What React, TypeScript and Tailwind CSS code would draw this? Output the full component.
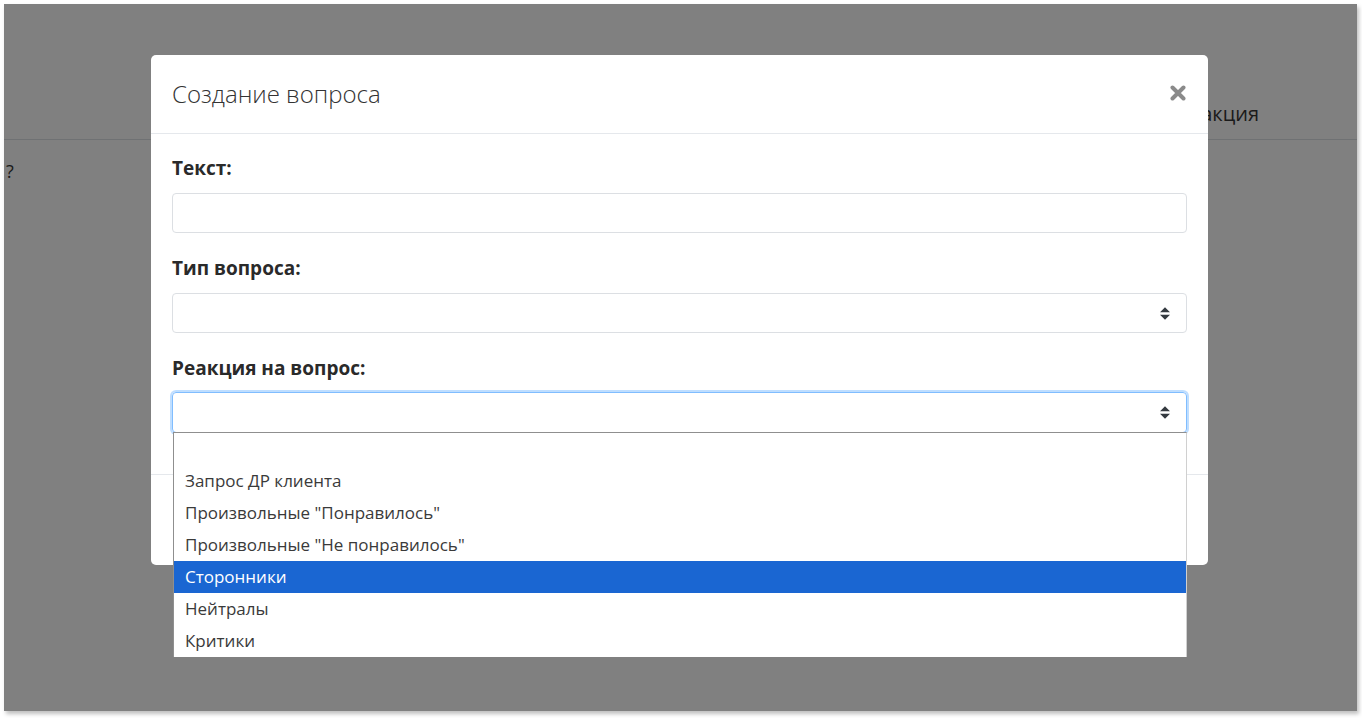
import React from "react";

const SelectArrows = () => (
  <svg width="10" height="13" viewBox="0 0 4 5" className="shrink-0">
    <path d="M2 0L0 2h4zm0 5L0 3h4z" fill="#343a40" />
  </svg>
);

const options = [
  "",
  "Запрос ДР клиента",
  'Произвольные "Понравилось"',
  'Произвольные "Не понравилось"',
  "Сторонники",
  "Нейтралы",
  "Критики",
];

export default function App() {
  return (
    <div
      className="w-[1362px] h-[718px] bg-white pl-[4px] pt-[4px] overflow-hidden"
      style={{ fontFamily: "'Open Sans', 'Noto Sans', sans-serif" }}
    >
      <div className="relative w-[1353px] h-[707px] bg-[#808080] shadow-[2px_3px_4px_rgba(0,0,0,0.25)] overflow-hidden">
        {/* background page (under overlay) */}
        <div className="flex justify-end h-[136px] border-b border-[#6f7173] pr-[98px] pt-[96px]">
          <span className="text-[20px] leading-[28px] text-[#1a1a1a]">Реакция</span>
        </div>
        <div className="pt-[20px] pl-[2px] text-[18px] leading-[22px] text-[#1a1a1a]">?</div>

        {/* modal */}
        <div className="absolute left-[147px] top-[51px] w-[1057px] h-[510px] bg-white rounded-[5px] flex flex-col">
          <div className="h-[79px] border-b border-[#e5e8ec] flex items-center justify-between pl-[21px] pr-[22px]">
            <h5 className="text-[24px] font-light text-[#333] leading-none">Создание вопроса</h5>
            <svg width="16" height="16" viewBox="0 0 16 16" className="mb-[3px]">
              <path d="M2.5 2.5L13.5 13.5M13.5 2.5L2.5 13.5" stroke="#8a8a8a" strokeWidth="4" strokeLinecap="round" />
            </svg>
          </div>
          <div className="px-[21px] pt-[21px]">
            <div className="text-[19px] font-bold text-[#2a2a2a] leading-[27px]">Текст:</div>
            <div className="mt-[11px] h-[40px] border border-[#dcdfe3] rounded-[4px]" />
            <div className="mt-[22px] text-[19px] font-bold text-[#2a2a2a] leading-[27px]">Тип вопроса:</div>
            <div className="mt-[11px] h-[40px] border border-[#dcdfe3] rounded-[4px] flex items-center justify-end pr-[16px]">
              <SelectArrows />
            </div>
            <div className="mt-[22px] text-[19px] font-bold text-[#2a2a2a] leading-[27px]">Реакция на вопрос:</div>
            <div className="mt-[10px] h-[41px] border border-[#80bdff] rounded-[4px] shadow-[0_0_0_2px_rgba(0,123,255,0.25)] flex items-center justify-end pr-[16px]">
              <SelectArrows />
            </div>
          </div>
          <div className="mt-[41px] border-t border-[#e5e8ec] flex-1 flex items-start justify-end px-[21px] pt-[24px]">
            <div className="w-[120px] h-[42px] rounded-[4px] border-2 border-[#b6f0d2] bg-white" />
          </div>
        </div>

        {/* open select listbox */}
        <div className="absolute left-[169px] top-[428px] w-[1014px] h-[225px] bg-white border-l border-t border-[#8f8f8f] border-r border-r-[#d0d0d0] overflow-hidden">
          {options.map((o, i) => (
            <div
              key={i}
              className={
                i === 4
                  ? "h-[32px] flex items-center pl-[11px] bg-[#1a66d2] text-white text-[17px]"
                  : "h-[32px] flex items-center pl-[11px] text-[#3a3a3a] text-[17px]"
              }
            >
              {o}
            </div>
          ))}
        </div>
      </div>
    </div>
  );
}
